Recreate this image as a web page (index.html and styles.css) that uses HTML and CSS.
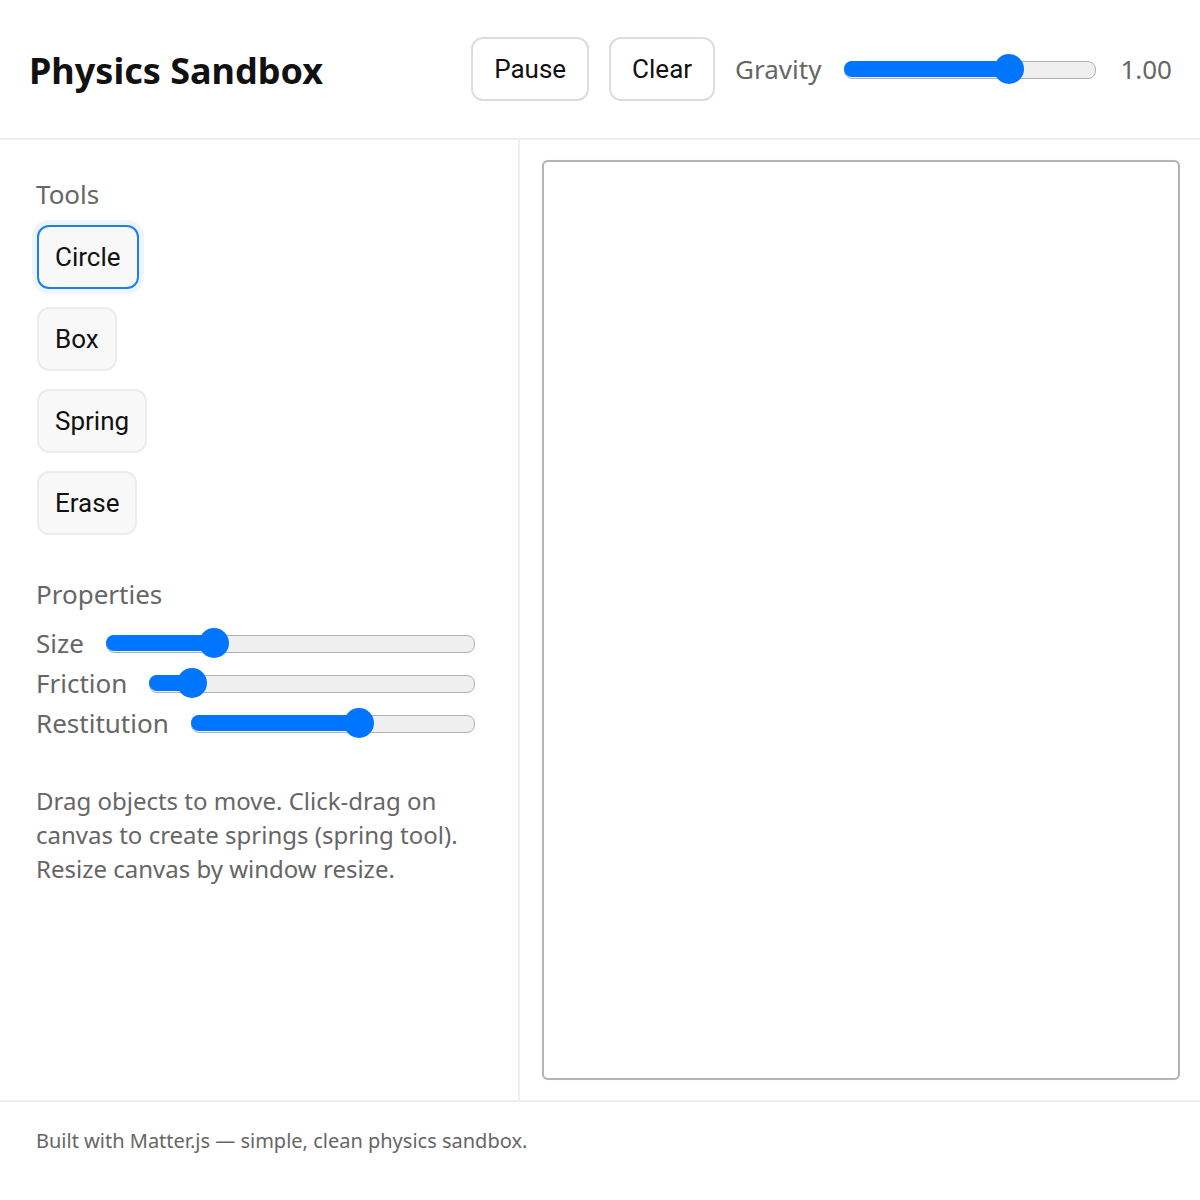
FILE: index.html
```html
<!DOCTYPE html>
<html>
<head>
<meta charset="utf-8">
<title>Physics Sandbox</title>
<link rel="stylesheet" href="styles.css">
</head>
<body>
<div class="app">
  <header class="header">
    <h1 class="title">Physics Sandbox</h1>
    <div class="controls">
      <button class="btn">Pause</button>
      <button class="btn">Clear</button>
      <span class="label">Gravity</span>
      <div class="slider gravity" style="--p:0.676"><div class="fill"></div><div class="thumb"></div></div>
      <span class="label value">1.00</span>
    </div>
  </header>
  <main class="main">
    <aside class="sidebar">
      <div class="section-title">Tools</div>
      <div class="tools">
        <button class="tool active">Circle</button>
        <button class="tool">Box</button>
        <button class="tool">Spring</button>
        <button class="tool">Erase</button>
      </div>
      <div class="section-title props">Properties</div>
      <div class="props-list">
        <div class="prop"><span class="label">Size</span><div class="slider" style="--p:0.274"><div class="fill"></div><div class="thumb"></div></div></div>
        <div class="prop"><span class="label">Friction</span><div class="slider" style="--p:0.095"><div class="fill"></div><div class="thumb"></div></div></div>
        <div class="prop"><span class="label">Restitution</span><div class="slider" style="--p:0.604"><div class="fill"></div><div class="thumb"></div></div></div>
      </div>
      <p class="help">Drag objects to move. Click-drag on canvas to create springs (spring tool). Resize canvas by window resize.</p>
    </aside>
    <section class="stage">
      <div class="canvas"></div>
    </section>
  </main>
  <footer class="footer">Built with Matter.js — simple, clean physics sandbox.</footer>
</div>
</body>
</html>
```
FILE: styles.css
```css
* { box-sizing: border-box; }
html, body { margin: 0; padding: 0; background: #fff; }
body { font-family: "Noto Sans", "Open Sans", sans-serif; color: #111; }
.app { display: flex; flex-direction: column; height: 1200px; }

.header {
  height: 140px;
  flex: none;
  display: flex;
  align-items: center;
  justify-content: space-between;
  padding: 0 28px 0 29px;
  border-bottom: 2px solid #eeeeee;
}
.title { margin: 3px 0 0 0; font-size: 36px; font-weight: 700; color: #111; letter-spacing: 0; }
.controls { display: flex; align-items: center; }

.btn {
  font-family: Roboto, sans-serif;
  font-size: 26px;
  color: #111;
  background: #fff;
  border: 2px solid #dddddd;
  border-radius: 12px;
  height: 64px;
  padding: 0 21px;
  margin-right: 20px;
  cursor: pointer;
}
.label { font-size: 26px; color: #666; white-space: nowrap; }
.value { margin-left: 24px; }

.slider {
  position: relative;
  height: 30px;
  flex: 1;
  margin-left: 22px;
}
.slider.gravity { flex: none; width: 252px; margin-left: 23px; }
.slider::before {
  content: "";
  position: absolute;
  left: 0; right: 0; top: 7px;
  height: 16px;
  background: #efefef;
  border: 1.5px solid #b0b0b0;
  border-radius: 8px;
}
.slider .fill {
  position: absolute;
  left: 0; top: 7px;
  height: 16px;
  width: calc(var(--p) * (100% - 30px) + 15px);
  background: #0075ff;
  border-radius: 8px 0 0 8px;
}
.slider .thumb {
  position: absolute;
  top: 0;
  left: calc(var(--p) * (100% - 30px));
  width: 30px; height: 30px;
  border-radius: 50%;
  background: #0075ff;
}

.main { flex: 1; display: flex; min-height: 0; }
.sidebar {
  width: 520px;
  flex: none;
  border-right: 2px solid #eeeeee;
  padding: 36px 43px 0 36px;
}
.section-title { font-size: 26px; color: #666; line-height: 36px; }
.tools { display: flex; flex-direction: column; align-items: flex-start; gap: 18px; margin-top: 13px; }
.tool {
  font-family: Roboto, sans-serif;
  font-size: 26px;
  color: #111;
  background: #f8f8f8;
  border: 2px solid #ececec;
  border-radius: 12px;
  height: 64px;
  padding: 0 16px;
  margin-left: 1px;
  cursor: pointer;
}
.tool.active {
  border-color: #1a80f0;
  box-shadow: 0 0 0 5px rgba(0, 117, 255, 0.07);
}
.section-title.props { margin-top: 41px; }
.props-list { margin-top: 11px; display: flex; flex-direction: column; }
.prop { display: flex; align-items: center; height: 40px; }
.prop .label { line-height: 40px; }

.help {
  margin: 41px 0 0 0;
  font-size: 24px;
  line-height: 34px;
  color: #666;
}

.stage { flex: 1; padding: 20px 20px 20px 22px; display: flex; }
.canvas {
  flex: 1;
  border: 2px solid #b4b4b4;
  border-radius: 6px;
  background: #fff;
  box-shadow: 0 0 1px rgba(0, 0, 0, 0.15);
}

.footer {
  flex: none;
  height: 100px;
  border-top: 2px solid #eeeeee;
  padding: 25px 36px 0 36px;
  font-size: 20px;
  line-height: 28px;
  color: #666;
}
```
